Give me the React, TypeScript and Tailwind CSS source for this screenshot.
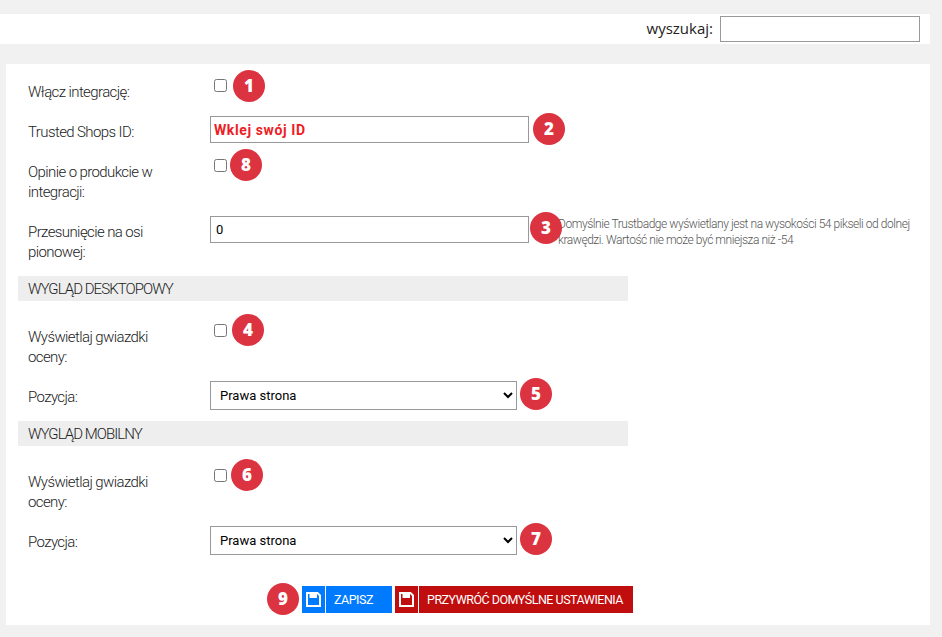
const labelFont = "font-['Roboto',sans-serif] text-[15px] tracking-[-0.6px] font-light leading-[20px] text-[#222]";

function SaveIcon() {
  return (
    <svg width="15" height="15" viewBox="0 0 15 15" fill="none" stroke="currentColor" strokeWidth="2">
      <path d="M1 1h10.5L14 3.5V14H1z" />
      <path d="M3.5 1.5h7.5v4.5H3.5z" fill="currentColor" stroke="none" />
    </svg>
  );
}

function Badge({ n, className = "" }: { n: number; className?: string }) {
  return (
    <span className={`flex h-[32px] w-[32px] shrink-0 items-center justify-center rounded-full bg-[#dc3340] font-['Open_Sans',sans-serif] text-[17px] font-extrabold text-white ${className}`}>
      {n}
    </span>
  );
}

function Label({ children, className = "" }: { children: React.ReactNode; className?: string }) {
  return <div className={`w-[192px] shrink-0 pl-[10px] pr-[30px] ${labelFont} ${className}`}>{children}</div>;
}

function Check({ className = "mt-[10px]" }: { className?: string }) {
  return <input type="checkbox" className={`ml-[4px] h-[13px] w-[13px] shrink-0 ${className}`} />;
}

function Position({ n }: { n: number }) {
  return (
    <div className="flex h-[40px]">
      <Label className="pt-[6px]">Pozycja:</Label>
      <select className="h-[29px] w-[307px] border border-[#999] bg-white pl-[5px] font-['Roboto',sans-serif] text-[13px] text-black">
        <option>Prawa strona</option>
      </select>
      <Badge n={n} className="ml-[3px] -mt-[3px]" />
    </div>
  );
}

function Section({ children }: { children: React.ReactNode }) {
  return (
    <div className={`flex h-[25px] w-[610px] items-center bg-[#eeeeee] pl-[10px] ${labelFont} tracking-[-0.95px]`}>{children}</div>
  );
}

function ActionButton({ label, className, pad }: { label: string; className: string; pad: string }) {
  return (
    <button className={`ml-[3px] flex h-[27px] items-stretch text-left text-white ${className}`}>
      <span className="box-content flex w-[23px] shrink-0 items-center justify-center border-r border-white"><SaveIcon /></span>
      <span className={`whitespace-nowrap font-['Roboto',sans-serif] text-[12.5px] font-normal leading-[27px] tracking-[-0.5px] ${pad}`}>{label}</span>
    </button>
  );
}

export default function App() {
  return (
    <div className="h-[637px] w-[942px] overflow-hidden bg-[#f1f1f1] pt-[14px]">
      <div className="flex h-[30px] w-[930px] items-center justify-end bg-white pr-[10px]">
        <span className="mb-[2px] mr-[7px] font-['Open_Sans',sans-serif] text-[15px] text-[#222]">wyszukaj:</span>
        <input className="h-[26px] w-[200px] border border-[#999] bg-white" />
      </div>

      <div className="ml-[6px] mt-[20px] h-[561px] w-[924px] bg-white pl-[12px] pt-[6px]">
        <div className="flex h-[46px]">
          <Label className="pt-[12px]">Włącz integrację:</Label>
          <div className="flex items-start">
            <Check className="mt-[9px]" />
            <Badge n={1} className="ml-[6px]" />
          </div>
        </div>

        <div className="flex h-[33px]">
          <Label className="pt-[6px]">Trusted Shops ID:</Label>
          <input
            defaultValue="Wklej swój ID"
            className="h-[27px] w-[319px] border border-[#999] bg-white pl-[3px] font-['Roboto',sans-serif] text-[14px] font-bold tracking-[0.6px] text-[#ee1c25]"
          />
          <Badge n={2} className="ml-[4px] -mt-[3px]" />
        </div>

        <div className="flex h-[67px]">
          <Label className="pt-[13px]">Opinie o produkcie w integracji:</Label>
          <div className="flex items-start">
            <Check />
            <Badge n={8} className="ml-[3px]" />
          </div>
        </div>

        <div className="flex h-[60px]">
          <Label className="pt-[6px]">Przesunięcie na osi pionowej:</Label>
          <input
            defaultValue="0"
            className="h-[27px] w-[319px] border border-[#999] bg-white pl-[5px] font-['Roboto',sans-serif] text-[13px] text-black"
          />
          <Badge n={3} className="relative z-10 ml-[1px] -mt-[4px]" />
          <p className="-ml-[4px] w-[360px] font-['Roboto',sans-serif] text-[12px] font-light leading-[16px] tracking-[-0.45px] text-[#555]">
            Domyślnie Trustbadge wyświetlany jest na wysokości 54 pikseli od dolnej krawędzi. Wartość nie może być mniejsza niż -54
          </p>
        </div>

        <Section>WYGLĄD DESKTOPOWY</Section>

        <div className="flex h-[67px] pt-[13px]">
          <Label className="pt-[13px]">Wyświetlaj gwiazdki oceny:</Label>
          <div className="flex items-start">
            <Check />
            <Badge n={4} className="ml-[5px]" />
          </div>
        </div>
        <div className="h-[13px]" />
        <Position n={5} />

        <Section>WYGLĄD MOBILNY</Section>

        <div className="flex h-[67px] pt-[13px]">
          <Label className="pt-[13px]">Wyświetlaj gwiazdki oceny:</Label>
          <div className="flex items-start">
            <Check />
            <Badge n={6} className="ml-[4px]" />
          </div>
        </div>
        <div className="h-[13px]" />
        <Position n={7} />

        <div className="mt-[17px] flex items-center pl-[249px]">
          <Badge n={9} />
          <ActionButton label="ZAPISZ" className="w-[90px] bg-[#007bff]" pad="pl-[8px]" />
          <ActionButton label="PRZYWRÓĆ DOMYŚLNE USTAWIENIA" className="w-[238px] bg-[#c00d0d]" pad="pl-[8px]" />
        </div>
      </div>
    </div>
  );
}
